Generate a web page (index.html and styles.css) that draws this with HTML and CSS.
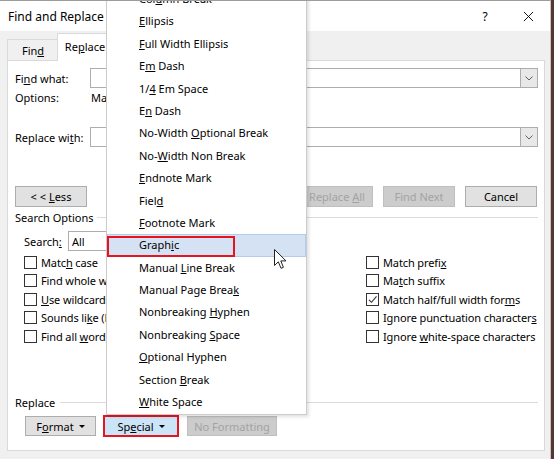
FILE: index.html
```html
<!DOCTYPE html>
<html>
<head>
<meta charset="utf-8">
<title>Find and Replace</title>
<link rel="stylesheet" href="styles.css">
</head>
<body>
<div class="window">
  <div class="titlebar">
    <span class="title">Find and Replace</span>
    <span class="help">?</span>
    <svg class="close" viewBox="0 0 12 12"><path d="M1 1 L11 11 M11 1 L1 11" stroke="#000" stroke-width="1" fill="none"/></svg>
  </div>
  <div class="tabs">
    <div class="tab"><span>Fin<u>d</u></span></div>
    <div class="tab active"><span>Re<u>p</u>lace</span></div>
  </div>
  <div class="panel">
    <div class="field-row">
      <span class="lbl">Fi<u>n</u>d what:</span>
      <div class="combo"><span class="combo-arrow"><svg viewBox="0 0 8 5" class="chev"><path d="M0.5 0.5 L4 4 L7.5 0.5" stroke="#606060" fill="none"/></svg></span></div>
    </div>
    <div class="opt-row"><span class="lbl opt-lbl">Options:</span><span class="clip opt-val">Match Half/Full Width Forms</span></div>
    <div class="field-row replace-row">
      <span class="lbl">Replace wi<u>t</u>h:</span>
      <div class="combo"><span class="combo-arrow"><svg viewBox="0 0 8 5" class="chev"><path d="M0.5 0.5 L4 4 L7.5 0.5" stroke="#606060" fill="none"/></svg></span></div>
    </div>
    <div class="btn-row">
      <button class="btn"><span>&lt; &lt; <u>L</u>ess</span></button>
      <button class="btn disabled push"><span>Replace <u>A</u>ll</span></button>
      <button class="btn disabled"><span>Find Next</span></button>
      <button class="btn"><span>Cancel</span></button>
    </div>
    <div class="group"><span>Search Options</span><span class="rule"></span></div>
    <div class="search-row">
      <span class="search-lbl">Search<u>:</u></span>
      <div class="combo-all">All</div>
    </div>
    <div class="checks">
      <div class="check"><span class="box"></span><span class="clip left-lbl">Matc<u>h</u> case</span></div>
      <div class="check"><span class="box"></span><span class="clip left-lbl">Find whole w<u>o</u>rds only</span></div>
      <div class="check"><span class="box"></span><span class="clip left-lbl"><u>U</u>se wildcards</span></div>
      <div class="check"><span class="box"></span><span class="clip left-lbl">Sounds li<u>k</u>e (English)</span></div>
      <div class="check"><span class="box"></span><span class="clip left-lbl">Find all <u>w</u>ord forms (English)</span></div>
      <div class="check"><span class="box"></span><span>Match prefi<u>x</u></span></div>
      <div class="check"><span class="box"></span><span>Ma<u>t</u>ch suffix</span></div>
      <div class="check"><span class="box"><svg viewBox="0 0 11 11" class="tick"><path d="M2 5.8 L4.5 8.3 L9.5 2.3" stroke="#333" stroke-width="1.1" fill="none"/></svg></span><span>Match half/full width for<u>m</u>s</span></div>
      <div class="check"><span class="box"></span><span>Ignore punctuation character<u>s</u></span></div>
      <div class="check"><span class="box"></span><span>Ignore <u>w</u>hite-space characters</span></div>
    </div>
    <div class="group replace-group"><span>Replace</span><span class="rule"></span></div>
    <div class="bottom-row">
      <button class="btn fmt"><span>F<u>o</u>rmat</span><span class="caret"></span></button>
      <button class="btn special"><span>Sp<u>e</u>cial</span><span class="caret"></span></button>
      <button class="btn disabled nofmt"><span>No Formatting</span></button>
    </div>
  </div>

  <div class="menu">
    <div class="item">Col<u>u</u>mn Break</div>
    <div class="item"><u>E</u>llipsis</div>
    <div class="item"><u>F</u>ull Width Ellipsis</div>
    <div class="item">E<u>m</u> Dash</div>
    <div class="item">1/<u>4</u> Em Space</div>
    <div class="item">E<u>n</u> Dash</div>
    <div class="item">No-Width <u>O</u>ptional Break</div>
    <div class="item">No-<u>W</u>idth Non Break</div>
    <div class="item"><u>E</u>ndnote Mark</div>
    <div class="item">Fiel<u>d</u></div>
    <div class="item"><u>F</u>ootnote Mark</div>
    <div class="item hl"><span class="redbox"></span>Graph<u>i</u>c</div>
    <div class="item">Manual <u>L</u>ine Break</div>
    <div class="item">Manual Page Brea<u>k</u></div>
    <div class="item">Nonbreaking <u>H</u>yphen</div>
    <div class="item">Nonbreaking <u>S</u>pace</div>
    <div class="item"><u>O</u>ptional Hyphen</div>
    <div class="item">Section <u>B</u>reak</div>
    <div class="item"><u>W</u>hite Space</div>
  </div>

  <svg class="cursor" viewBox="0 0 13 21"><path d="M0.5 0.5 L0.5 16.5 L4.3 12.8 L7 19.3 L9.4 18.3 L6.8 11.9 L12 11.9 Z" fill="#fff" stroke="#222" stroke-width="1" stroke-linejoin="round"/></svg>
</div>
</body>
</html>
```

FILE: styles.css
```css
* { box-sizing: border-box; }
html, body { margin: 0; padding: 0; }
body {
  width: 554px;
  height: 459px;
  overflow: hidden;
  background: #553630;
  font-family: "Noto Sans", "Open Sans", sans-serif;
  font-size: 11px;
  color: #000;
}
.window {
  position: relative;
  width: 551px;
  height: 459px;
  background: #f0f0f0;
  border-top: 1px solid #9c9c9c;
  border-right: 1px solid #c4c4c4;
  overflow: hidden;
}
.titlebar {
  height: 30px;
  background: #fff;
  display: flex;
  align-items: center;
  padding-left: 8px;
}
.title { font-size: 12px; }
.help {
  margin-left: auto;
  width: 12px;
  text-align: center;
  font-size: 12px;
  margin-right: 32px;
}
.close { width: 11px; height: 11px; margin-right: 16px; }

.tabs {
  height: 29px;
  display: flex;
  align-items: flex-end;
  padding-left: 7px;
  position: relative;
  z-index: 1;
}
.tab {
  height: 21px;
  width: 52px;
  border: 1px solid #d9d9d9;
  border-bottom: none;
  display: flex;
  align-items: center;
  justify-content: center;
  padding-top: 1px;
}
.tab.active {
  height: 28px;
  width: 56px;
  margin-left: -2px;
  margin-bottom: -1px;
  background: #fff;
  padding-top: 0;
  padding-bottom: 3px;
}

.panel {
  margin: 0 5px 0 7px;
  height: 391px;
  background: #fff;
  border: 1px solid #d9d9d9;
  padding: 7px 6px 0 7px;
}
.clip { overflow: hidden; white-space: nowrap; display: block; }
.opt-val { width: 15px; }
.left-lbl { max-width: 65px; }

.field-row { display: flex; height: 20px; align-items: center; }
.field-row .lbl { width: 75px; }
.replace-row { margin-top: 20px; }
.combo {
  flex: 1;
  height: 20px;
  border: 1px solid #adadad;
  display: flex;
  justify-content: flex-end;
  background: #fff;
}
.combo-arrow {
  width: 17px;
  height: 100%;
  background: #e8e8e8;
  border-left: 1px solid #adadad;
  display: flex;
  align-items: center;
  justify-content: center;
}
.chev { width: 8px; height: 5px; }
.opt-row { display: flex; height: 19px; align-items: center; }
.opt-lbl { width: 76px; }

.btn-row {
  display: flex;
  margin-top: 39px;
  height: 21px;
  margin-right: 1px;
  gap: 10px;
}
.btn {
  height: 21px;
  width: 72px;
  border: 1px solid #adadad;
  background: #e1e1e1;
  font: inherit;
  color: #000;
  padding: 0;
  display: flex;
  align-items: center;
  justify-content: center;
  gap: 5px;
  white-space: nowrap;
}
.btn.disabled { background: #cccccc; border-color: #bfbfbf; color: #a3a3a3; }
.push { margin-left: auto; }

.group { display: flex; align-items: center; height: 20px; }
.rule { flex: 1; height: 1px; background: #dcdcdc; margin-left: 3px; }
.replace-group { margin-top: 46.5px; }
.replace-group .rule { margin-left: 5px; }

.search-row {
  display: flex;
  align-items: center;
  margin-top: 4px;
  height: 20px;
  padding-left: 9px;
}
.search-lbl { width: 44px; }
.combo-all {
  width: 60px;
  height: 20px;
  border: 1px solid #adadad;
  display: flex;
  align-items: center;
  padding-left: 3px;
}

.checks {
  margin-top: 2px;
  padding-left: 9px;
  display: grid;
  grid-template-columns: 342px 1fr;
  grid-template-rows: repeat(5, 18.5px);
  grid-auto-flow: column;
  letter-spacing: -0.12px;
}
.check { display: flex; align-items: center; white-space: nowrap; }
.box {
  width: 13px;
  height: 13px;
  flex: none;
  border: 1px solid #333;
  background: #fff;
  margin-right: 4px;
  display: flex;
  align-items: center;
  justify-content: center;
}
.tick { width: 11px; height: 11px; }

.bottom-row {
  display: flex;
  align-items: center;
  margin-top: 3px;
  height: 22px;
  padding-left: 10px;
}
.fmt { width: 71px; height: 20px; }
.special {
  width: 76px;
  height: 22px;
  margin-left: 7px;
  border: 2px solid #e6141e;
  background: #cce4f7;
}
.nofmt { width: 90px; height: 20px; margin-left: 8px; }
.caret {
  width: 0;
  height: 0;
  border-left: 3px solid transparent;
  border-right: 3px solid transparent;
  border-top: 3px solid #000;
}

.menu {
  position: absolute;
  left: 106px;
  top: -15px;
  width: 201px;
  background: #fff;
  border: 1px solid #cccccc;
  padding: 1px 0;
  z-index: 5;
  box-shadow: 2px 2px 3px rgba(0, 0, 0, 0.12);
}
.item {
  height: 22.4px;
  line-height: 22.4px;
  padding-left: 32px;
  position: relative;
  white-space: nowrap;
}
.item.hl {
  background: #d5e2f4;
  box-shadow: inset 0 0 0 1px #b3cbed;
}
.redbox {
  position: absolute;
  left: 0;
  top: 1.5px;
  bottom: 0;
  width: 128px;
  border: 2px solid #e6141e;
}
.cursor {
  position: absolute;
  left: 274px;
  top: 248px;
  width: 13px;
  height: 21px;
  z-index: 6;
}
```
